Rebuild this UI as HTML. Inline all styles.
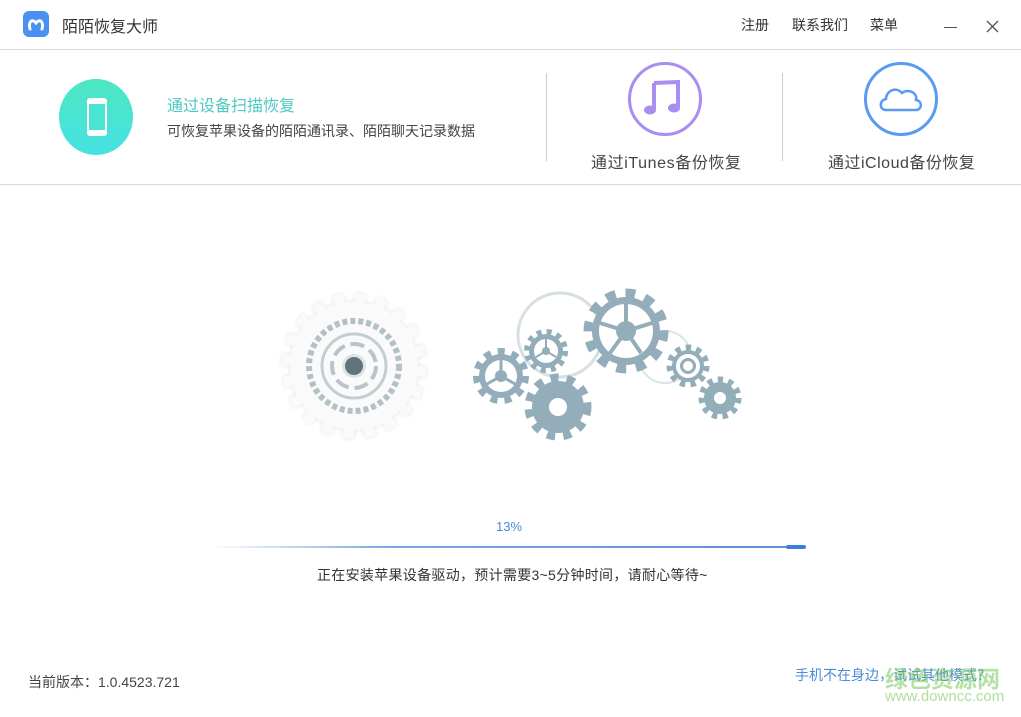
<!DOCTYPE html>
<html><head><meta charset="utf-8"><style>
*{margin:0;padding:0;box-sizing:border-box}
body{width:1021px;height:717px;background:#fff;font-family:"Liberation Sans","Noto Sans CJK SC",sans-serif;position:relative;overflow:hidden;color:#333}
.a{position:absolute;white-space:nowrap}
</style></head><body>
<div class="a" style="left:23px;top:11px;width:26px;height:26px;background:#4a90f0;border-radius:6px"></div>
<svg class="a" style="left:23px;top:11px" width="26" height="26"><path d="M7 18 C5 11 9 7 13 12 C17 7 21 11 19 18" stroke="#fff" stroke-width="3" fill="none" stroke-linecap="round"/></svg>
<div class="a" style="left:62px;top:13px;font-size:16px;color:#333">陌陌恢复大师</div>
<div class="a" style="left:741px;top:15px;font-size:14px">注册</div>
<div class="a" style="left:792px;top:15px;font-size:14px">联系我们</div>
<div class="a" style="left:870px;top:15px;font-size:14px">菜单</div>
<div class="a" style="left:944px;top:27px;width:13px;height:1px;background:#555"></div>
<svg class="a" style="left:986px;top:20px" width="13" height="13"><path d="M1 1L12 12M12 1L1 12" stroke="#555" stroke-width="1.3"/></svg>
<div class="a" style="left:0;top:49px;width:1021px;height:1px;background:#d8d8d8"></div>
<div class="a" style="left:0;top:184px;width:1021px;height:1px;background:#d8d8d8"></div>
<div class="a" style="left:59px;top:79px;width:74px;height:76px;border-radius:50%;background:linear-gradient(#4ee6c2,#45e2e2)"></div>
<div class="a" style="left:87px;top:98px;width:20px;height:38px;background:#fff;border-radius:3px"></div>
<div class="a" style="left:89px;top:104px;width:16px;height:26px;background:#4ae4d2"></div>
<div class="a" style="left:167px;top:92px;font-size:16px;color:#4cc9c0">通过设备扫描恢复</div>
<div class="a" style="left:167px;top:121px;font-size:14px;color:#444">可恢复苹果设备的陌陌通讯录、陌陌聊天记录数据</div>
<div class="a" style="left:546px;top:73px;width:1px;height:88px;background:#ccc"></div>
<div class="a" style="left:782px;top:73px;width:1px;height:88px;background:#ccc"></div>
<div class="a" style="left:628px;top:62px;width:74px;height:74px;border-radius:50%;border:3px solid #a98df0"></div>
<svg class="a" style="left:640px;top:75px" width="50" height="50"><path d="M14 8 L38 7 L38 33" stroke="#a98df0" stroke-width="4" fill="none"/><path d="M14 8 L14 35" stroke="#a98df0" stroke-width="4"/><ellipse cx="10" cy="35" rx="6" ry="4.5" fill="#a98df0"/><ellipse cx="34" cy="33" rx="6" ry="4.5" fill="#a98df0"/></svg>
<div class="a" style="left:591px;top:149px;font-size:16px;color:#444;letter-spacing:0.6px">通过iTunes备份恢复</div>
<div class="a" style="left:864px;top:62px;width:74px;height:74px;border-radius:50%;border:3px solid #5a9af0"></div>
<svg class="a" style="left:876px;top:80px" width="50" height="40"><path d="M10 30 C3 30 3 20 10 19 C10 11 20 6 26 13 C32 8 42 13 40 20 C47 21 46 30 40 30 Z" stroke="#5a9af0" stroke-width="2.5" fill="none"/></svg>
<div class="a" style="left:828px;top:149px;font-size:16px;color:#444;letter-spacing:0.5px">通过iCloud备份恢复</div>
<svg class="a" style="left:0;top:0" width="1021" height="717">
<defs><filter id="sh"><feDropShadow dx="0" dy="0" stdDeviation="2" flood-color="#000" flood-opacity="0.12"/></filter></defs>
<g filter="url(#sh)"><circle cx="354" cy="366" r="64" fill="#fafafa"/><circle cx="354" cy="366" r="68" fill="none" stroke="#fafafa" stroke-width="9" stroke-dasharray="10.7 10.7"/></g>
<circle cx="354" cy="366" r="45" fill="none" stroke="#b4c0c4" stroke-width="6" stroke-dasharray="5 3"/>
<circle cx="354" cy="366" r="32" fill="none" stroke="#c4ced2" stroke-width="3"/>
<circle cx="354" cy="366" r="22" fill="none" stroke="#b8c4c8" stroke-width="4" stroke-dasharray="14 6"/>
<circle cx="354" cy="366" r="12" fill="#dde4e6"/>
<circle cx="354" cy="366" r="9" fill="#5f7579"/>
<circle cx="560" cy="335" r="42" fill="none" stroke="#d6e0e2" stroke-width="3"/>
<circle cx="665" cy="357" r="26" fill="none" stroke="#dde4e6" stroke-width="2"/>
<g fill="#94adbb" stroke="#94adbb">
<circle cx="626" cy="331" r="34" stroke="none"/><circle cx="626" cy="331" r="38" fill="none" stroke-width="9" stroke-dasharray="9.9 9.9"/>
<circle cx="501" cy="376" r="22" stroke="none"/><circle cx="501" cy="376" r="24.5" fill="none" stroke-width="7" stroke-dasharray="7 7"/>
<circle cx="546" cy="351" r="17" stroke="none"/><circle cx="546" cy="351" r="19" fill="none" stroke-width="6" stroke-dasharray="5 5"/>
<circle cx="558" cy="407" r="26" stroke="none"/><circle cx="558" cy="407" r="29.5" fill="none" stroke-width="8" stroke-dasharray="8.2 8.2"/>
<circle cx="688" cy="366" r="16" stroke="none"/><circle cx="688" cy="366" r="18.5" fill="none" stroke-width="6" stroke-dasharray="5.3 5.3"/>
<circle cx="720" cy="398" r="16" stroke="none"/><circle cx="720" cy="398" r="18.5" fill="none" stroke-width="6" stroke-dasharray="5.3 5.3"/>
</g>
<g fill="#fff"><circle cx="626" cy="331" r="27"/><circle cx="501" cy="376" r="16"/><circle cx="546" cy="351" r="12"/><circle cx="558" cy="407" r="9"/><circle cx="688" cy="366" r="12"/><circle cx="720" cy="398" r="6"/></g>
<g stroke="#94adbb" stroke-width="4" fill="#94adbb">
<path d="M626 331L626 304M626 331L652 323M626 331L641 353M626 331L610 353M626 331L600 323" /><circle cx="626" cy="331" r="10" stroke="none"/>
<path d="M501 376L501 360M501 376L515 384M501 376L487 384" stroke-width="3"/><circle cx="501" cy="376" r="6" stroke="none"/>
<path d="M546 351L546 339M546 351L556 357M546 351L536 357" stroke-width="2"/><circle cx="546" cy="351" r="4" stroke="none"/>
<circle cx="688" cy="366" r="8" stroke="none"/></g>
<circle cx="688" cy="366" r="5" fill="#fff"/>
<defs><linearGradient id="pg"><stop offset="0" stop-color="#fff"/><stop offset="0.3" stop-color="#7aa8e0"/><stop offset="1" stop-color="#5a8fdc"/></linearGradient></defs>
<rect x="210" y="546" width="590" height="2" fill="url(#pg)"/>
<rect x="786" y="545" width="20" height="4" rx="2" fill="#3a7fd8"/>
</svg>
<div class="a" style="left:496px;top:519px;font-size:13px;color:#4a8ad8">13%</div>
<div class="a" style="left:317px;top:565px;font-size:14px;color:#333;letter-spacing:0.3px">正在安装苹果设备驱动，预计需要3~5分钟时间，请耐心等待~</div>
<div class="a" style="left:28px;top:672px;font-size:14px;color:#444">当前版本：1.0.4523.721</div>
<div class="a" style="left:795px;top:665px;font-size:14px;color:#4a8ad8">手机不在身边，试试其他模式？</div>
<div class="a" style="left:885px;top:660px;font-size:23px;color:rgba(120,200,90,0.55);font-weight:bold">绿色资源网</div>
<div class="a" style="left:885px;top:688px;font-size:15px;color:rgba(120,200,90,0.6)">www.downcc.com</div>
</body></html>
